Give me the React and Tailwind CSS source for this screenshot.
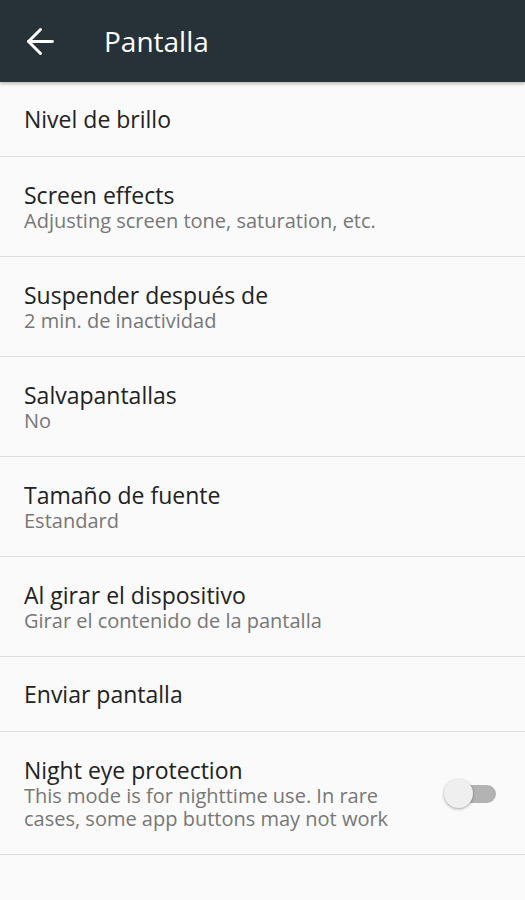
import { ArrowLeft } from 'lucide-react';

const items = [
  { title: 'Nivel de brillo', h: 'h-[75px]' },
  { title: 'Screen effects', sub: 'Adjusting screen tone, saturation, etc.', h: 'h-[100px]' },
  { title: 'Suspender después de', sub: '2 min. de inactividad', h: 'h-[100px]' },
  { title: 'Salvapantallas', sub: 'No', h: 'h-[100px]' },
  { title: 'Tamaño de fuente', sub: 'Estandard', h: 'h-[100px]' },
  { title: 'Al girar el dispositivo', sub: 'Girar el contenido de la pantalla', h: 'h-[100px]' },
  { title: 'Enviar pantalla', h: 'h-[75px]' },
];

function Toggle() {
  return (
    <div className="relative h-[29px] w-[52px] shrink-0">
      <div className="absolute left-[8px] top-[6px] h-[18px] w-[44px] rounded-full bg-[#b3b3b3]" />
      <div className="absolute left-0 top-0 h-[29px] w-[29px] rounded-full bg-[#efefef] shadow-[0_1px_3px_rgba(0,0,0,0.35)]" />
    </div>
  );
}

export default function App() {
  return (
    <div className="min-h-[900px] w-[525px] bg-[#fafafa]" style={{ fontFamily: '"Open Sans", "Noto Sans", sans-serif' }}>
      <header className="flex h-[82px] items-center bg-[#263238] text-white shadow-[0_2px_3px_rgba(0,0,0,0.25)]">
        <ArrowLeft className="ml-[20px] h-[41px] w-[41px]" strokeWidth={1.75} />
        <h1 className="ml-[43px] text-[28px] leading-none">Pantalla</h1>
      </header>
      <ul>
        {items.map(item => (
          <li key={item.title} className={`flex flex-col justify-center border-b border-[#dedede] px-6 ${item.h}`}>
            <p className="text-[23px] leading-[28px] text-[#222222]">{item.title}</p>
            {item.sub && <p className="text-[20px] leading-[24px] text-[#777777]">{item.sub}</p>}
          </li>
        ))}
        <li className="flex h-[123px] items-center justify-between border-b border-[#dedede] pl-6 pr-[29px]">
          <div>
            <p className="text-[23px] leading-[28px] text-[#222222]">Night eye protection</p>
            <p className="w-[380px] text-[20px] leading-[23px] text-[#777777]">This mode is for nighttime use. In rare cases, some app buttons may not work</p>
          </div>
          <Toggle />
        </li>
      </ul>
    </div>
  );
}
